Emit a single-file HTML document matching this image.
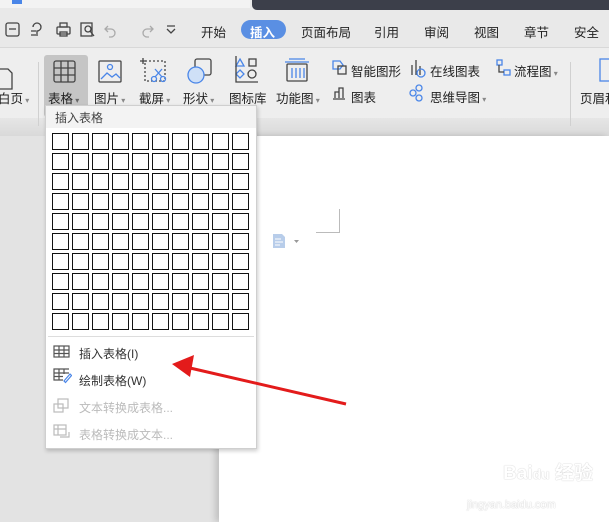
<!DOCTYPE html><html><head><meta charset="utf-8"><style>
*{margin:0;padding:0;box-sizing:border-box}
body{width:609px;height:522px;overflow:hidden;position:relative;background:#e3e3e3;font-family:"Liberation Sans","Noto Sans CJK SC",sans-serif;font-size:12px;color:#333}
.a{position:absolute}
.t{position:absolute;font-size:12.5px;color:#222;white-space:nowrap}
.cell{position:absolute;width:17px;height:17px;border:1.5px solid #111;background:#fff}
</style></head><body>
<div class="a" style="left:0;top:0;width:609px;height:48px;background:#e9e9e9"></div>
<div class="a" style="left:0;top:0;width:250px;height:8px;background:#f3f3f3"></div>
<div class="a" style="left:12px;top:0;width:10px;height:4px;background:#4a86e8"></div>
<div class="a" style="left:252px;top:0;width:357px;height:10px;background:#3c3f4a;border-bottom-left-radius:5px"></div>
<div class="a" style="left:0;top:47px;width:609px;height:1px;background:#d8d8d8"></div>
<svg class="a" style="left:0;top:18px" width="190" height="24" fill="none" stroke="#444" stroke-width="1.3">
<rect x="6" y="5" width="13" height="13" rx="2"/><line x1="9" y1="11" x2="16" y2="11"/>
<path d="M33 9 a4 4 0 1 1 4 4 v5 M31 13 h5 M31 17 h5"/>
<rect x="57" y="9" width="13" height="7" rx="1"/><rect x="60" y="5" width="7" height="4"/><rect x="60" y="14" width="7" height="4"/>
<rect x="81" y="5" width="11" height="13"/><circle cx="88" cy="11" r="3"/><line x1="90" y1="13" x2="94" y2="18"/>
<path stroke="#aaa" d="M108 8 l-3 3 l3 3 M105 11 h6 a4 4 0 0 1 0 8 h-2"/>
<path stroke="#aaa" d="M150 8 l3 3 l-3 3 M153 11 h-6 a4 4 0 0 0 0 8 h2"/>
<path d="M167 8 h8 M167 11 l4 4 l4 -4"/></svg>
<div class="t" style="left:201px;top:22px">开始</div>
<div class="a" style="left:241px;top:20px;width:45px;height:19px;border-radius:10px;background:#5a8fe3"></div>
<div class="t" style="left:250px;top:22px;color:#fff;font-weight:bold">插入</div>
<div class="t" style="left:301px;top:22px">页面布局</div>
<div class="t" style="left:374px;top:22px">引用</div>
<div class="t" style="left:424px;top:22px">审阅</div>
<div class="t" style="left:474px;top:22px">视图</div>
<div class="t" style="left:524px;top:22px">章节</div>
<div class="t" style="left:574px;top:22px">安全</div>
<div class="a" style="left:0;top:48px;width:609px;height:70px;background:#eeeeee"></div>
<div class="a" style="left:0;top:118px;width:609px;height:18px;background:linear-gradient(#e6e6e6,#d9d9d9)"></div>
<div class="a" style="left:38px;top:62px;width:1px;height:64px;background:#d0d0d0"></div>
<div class="a" style="left:570px;top:62px;width:1px;height:64px;background:#d0d0d0"></div>
<div class="a" style="left:44px;top:55px;width:44px;height:62px;background:#c5c5c5;border-radius:3px"></div>
<svg class="a" style="left:0;top:55px" width="609" height="40" fill="none" stroke="#444" stroke-width="1.3">
<path d="M-2 14 h10 l4 4 v16 h-14"/>
<rect x="54" y="6" width="21" height="21" rx="2"/><path d="M54 13 h21 M54 20 h21 M61 6 v21 M68 6 v21"/>
<rect x="99" y="6" width="22" height="21" rx="1"/><circle cx="110" cy="12" r="2.5" stroke="#4a86e8"/><path d="M101 24 l6 -6 l5 4 l4 -3 l4 4" stroke="#4a86e8"/>
<rect x="145" y="6" width="20" height="20" stroke-dasharray="2 2"/><path d="M143 3 v6 M140 6 h6" /><circle cx="154" cy="24" r="2.5" stroke="#4a86e8"/><circle cx="163" cy="24" r="2.5" stroke="#4a86e8"/><path d="M155 22 l7 -8 M162 22 l-7 -8" stroke="#4a86e8"/>
<rect x="195" y="4" width="16" height="16" rx="2"/><circle cx="196" cy="20" r="8" stroke="#4a86e8" fill="#cfe0f7"/>
<path d="M240 4 l4 7 h-8z" stroke="#4a86e8"/><rect x="249" y="4" width="7" height="7"/><path d="M240 15 l4 4 l-4 4 l-4 -4z" stroke="#4a86e8"/><circle cx="252" cy="19" r="4"/><path d="M236 1 v26 h22" />
<rect x="287" y="9" width="20" height="17" rx="1"/><path d="M285 7 h24 M289 4 h16 M292 13 v10 M296 13 v10 M300 13 v10 M304 13 v10" stroke="#4a86e8"/>
<path d="M333 6 h7 l3 4 l-3 4 h-7z" stroke="#4a86e8"/><rect x="338" y="11" width="8" height="8"/>
<path d="M412 10 v10 M416 5 v15 M420 11 v9" /><circle cx="421" cy="18" r="4" stroke="#4a86e8"/>
<rect x="497" y="5" width="5" height="5" stroke="#4a86e8"/><rect x="504" y="15" width="6" height="5" stroke="#4a86e8"/><path d="M499 10 v7 h5"/>
<rect x="600" y="4" width="12" height="22" stroke="#4a86e8"/>
</svg>
<svg class="a" style="left:330px;top:82px" width="160" height="24" fill="none" stroke="#444" stroke-width="1.3"><path d="M5 16 v-6 h4 v6 M9 16 v-10 h4 v10 M3 17 h12"/><circle cx="89" cy="6" r="3" stroke="#4a86e8"/><circle cx="89" cy="16" r="3" stroke="#4a86e8"/><circle cx="83" cy="11" r="3" stroke="#4a86e8"/></svg>
<div class="t" style="left:-2px;top:88px">白页<span style="color:#888;font-size:8px"> ▾</span></div>
<div class="t" style="left:48px;top:88px">表格<span style="color:#666;font-size:8px"> ▾</span></div>
<div class="t" style="left:94px;top:88px">图片<span style="color:#888;font-size:8px"> ▾</span></div>
<div class="t" style="left:139px;top:88px">截屏<span style="color:#888;font-size:8px"> ▾</span></div>
<div class="t" style="left:183px;top:88px">形状<span style="color:#888;font-size:8px"> ▾</span></div>
<div class="t" style="left:229px;top:88px">图标库</div>
<div class="t" style="left:276px;top:88px">功能图<span style="color:#888;font-size:8px"> ▾</span></div>
<div class="t" style="left:351px;top:61px">智能图形</div>
<div class="t" style="left:351px;top:87px">图表</div>
<div class="t" style="left:430px;top:61px">在线图表</div>
<div class="t" style="left:430px;top:87px">思维导图<span style="color:#888;font-size:8px"> ▾</span></div>
<div class="t" style="left:514px;top:61px">流程图<span style="color:#888;font-size:8px"> ▾</span></div>
<div class="t" style="left:580px;top:88px">页眉和</div>
<div class="a" style="left:219px;top:136px;width:390px;height:386px;background:#fff;box-shadow:-4px 0 6px rgba(0,0,0,.15)"></div>
<div class="a" style="left:316px;top:209px;width:24px;height:24px;border-right:1px solid #bbb;border-bottom:1px solid #bbb"></div>
<svg class="a" style="left:272px;top:233px" width="30" height="16"><path d="M1 1 h9 l3 3 v11 h-12z" fill="#b8cdea"/><path d="M3 6 h6 M3 9 h8 M3 12 h5" stroke="#fff"/><path d="M22 7 h5 l-2.5 3z" fill="#999"/></svg>
<div class="a" style="left:503px;top:458px;font-size:19px;color:#fff;text-shadow:0 0 1px #aaa;font-weight:bold">Bai<span style="font-size:14px">du</span> 经验</div>
<div class="a" style="left:467px;top:499px;font-size:11px;color:#fff;text-shadow:0 0 1px #aaa">jingyan.baidu.com</div>
<div class="a" style="left:45px;top:105px;width:212px;height:344px;background:#fff;border:1px solid #cfcfcf;box-shadow:1px 2px 4px rgba(0,0,0,.2)"></div>
<div class="a" style="left:46px;top:106px;width:210px;height:22px;background:#f3f3f3"></div>
<div class="t" style="left:55px;top:109px;font-size:12px;color:#444">插入表格</div>
<div id="g"></div>
<div class="a" style="left:48px;top:336px;width:206px;height:1px;background:#ddd"></div>
<svg class="a" style="left:52px;top:343px" width="20" height="100" fill="none" stroke-width="1.2">
<g stroke="#555"><rect x="2" y="3" width="15" height="11"/><path d="M2 7 h15 M2 10.5 h15 M7 3 v11 M12 3 v11"/></g>
<g stroke="#555"><path d="M17 26 h-15 v11 h9 M2 30 h15 M2 33.5 h9 M7 26 v11 M12 26 v5"/></g><path d="M12 38 l6 -7 l1.5 1.5 l-6 7z" stroke="#4a86e8"/>
<g stroke="#bbb"><rect x="6" y="56" width="10" height="9"/><rect x="2" y="61" width="9" height="8"/></g>
<g stroke="#bbb"><rect x="2" y="82" width="12" height="10"/><path d="M2 86 h12 M6 82 v10 M8 94 h9 v-5"/></g>
</svg>
<div class="t" style="left:79px;top:345px;font-size:12px;color:#333">插入表格(I)</div>
<div class="t" style="left:79px;top:372px;font-size:12px;color:#333">绘制表格(W)</div>
<div class="t" style="left:79px;top:399px;font-size:12px;color:#bbb">文本转换成表格...</div>
<div class="t" style="left:79px;top:426px;font-size:12px;color:#bbb">表格转换成文本...</div>
<svg class="a" style="left:0;top:0" width="609" height="522"><line x1="346" y1="404" x2="190" y2="368" stroke="#e31b1b" stroke-width="3"/><path d="M172 364 l22 -9 l-4 22z" fill="#e31b1b"/></svg>
<script>
var h='';for(var r=0;r<10;r++)for(var c=0;c<10;c++)h+='<div class="cell" style="left:'+(52+c*20)+'px;top:'+(133+r*20)+'px"></div>';document.getElementById('g').innerHTML=h;
</script>
</body></html>
